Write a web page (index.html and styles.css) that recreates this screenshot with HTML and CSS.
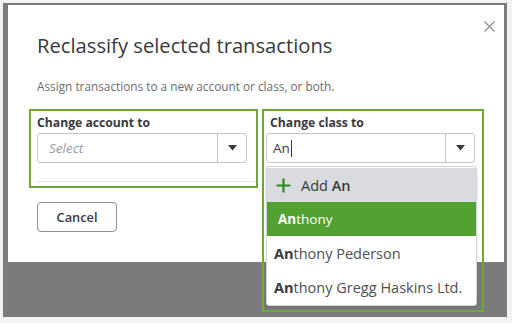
FILE: index.html
```html
<!DOCTYPE html>
<html>
<head>
<meta charset="utf-8">
<link rel="stylesheet" href="styles.css">
</head>
<body>
<div class="overlay">
  <div class="modal">
    <button class="close" aria-label="Close">
      <svg width="11" height="11" viewBox="0 0 11 11"><path d="M0.5 0.5 L10.5 10.5 M10.5 0.5 L0.5 10.5" stroke="#8d9096" stroke-width="1.3" fill="none"/></svg>
    </button>
    <h1 class="title">Reclassify selected transactions</h1>
    <p class="subtitle">Assign transactions to a new account or class, or both.</p>
    <div class="fields">
      <div class="field field-account">
        <label class="label">Change account to</label>
        <div class="select">
          <span class="select-value placeholder">Select</span>
          <span class="select-arrow"><svg width="9" height="6" viewBox="0 0 9 6"><path d="M0 0 H9 L4.5 5.5 Z" fill="#393a3d"/></svg></span>
        </div>
        <div class="divider"></div>
      </div>
      <div class="field field-class">
        <label class="label label-class">Change class to</label>
        <div class="select">
          <span class="select-value">An<span class="caret"></span></span>
          <span class="select-arrow"><svg width="9" height="6" viewBox="0 0 9 6"><path d="M0 0 H9 L4.5 5.5 Z" fill="#393a3d"/></svg></span>
        </div>
        <ul class="dropdown">
          <li class="option option-add">
            <svg class="plus" width="15" height="15" viewBox="0 0 15 15"><path d="M7.5 0.5 V14.5 M0.5 7.5 H14.5" stroke="#2e8c1e" stroke-width="2.2" fill="none"/></svg>
            <span>Add <b>An</b></span>
          </li>
          <li class="option option-active"><b>An</b>thony</li>
          <li class="option"><b>An</b>thony Pederson</li>
          <li class="option"><b>An</b>thony Gregg Haskins Ltd.</li>
        </ul>
      </div>
    </div>
    <button class="cancel">Cancel</button>
  </div>
</div>
</body>
</html>
```

FILE: styles.css
```css
* { box-sizing: border-box; }
html, body { margin: 0; padding: 0; }
body {
  background: #f3f3f3;
  width: 512px;
  height: 323px;
  padding: 3px 0 0 3px;
  font-family: "Open Sans", Lato, sans-serif;
  color: #393a3d;
  overflow: hidden;
}
.overlay {
  width: 504px;
  height: 314px;
  background: #7b7b7b;
  padding: 2px 0 0 5px;
}
.modal {
  position: relative;
  width: 496px;
  height: 257px;
  background: #fff;
  padding: 0 0 0 21px;
}
.close {
  position: absolute;
  top: 12px;
  right: 5px;
  width: 19px;
  height: 19px;
  padding: 4px;
  border: 0;
  background: none;
}
.close svg { display: block; }
.title {
  margin: 0;
  padding: 27px 0 0 8px;
  font-size: 20.2px;
  line-height: 26px;
  font-weight: 400;
  color: #393a3d;
}
.subtitle {
  margin: 0;
  padding: 19px 0 0 8px;
  font-size: 11.8px;
  line-height: 18px;
  color: #6b6c72;
}
.fields {
  display: flex;
  align-items: flex-start;
  gap: 4px;
  height: 79px;
  margin-top: 14px;
}
.field {
  position: relative;
  flex: none;
  border: 2px solid #6fa83b;
}
.field-account {
  width: 229px;
  height: 79px;
  padding: 4px 9px 0 6px;
}
.field-class {
  width: 222px;
  height: 203px;
  padding: 4px 7px 0 2px;
}
.label {
  display: block;
  font-size: 12.2px;
  line-height: 16px;
  font-weight: 700;
  color: #393a3d;
  margin-bottom: 2px;
}
.label-class { padding-left: 4px; }
.select {
  display: flex;
  height: 30px;
  border: 1px solid #c4c6ca;
  border-radius: 3px;
  background: #fff;
}
.select-value {
  flex: 1;
  display: flex;
  align-items: center;
  padding-left: 6px;
  font-size: 13.5px;
  color: #393a3d;
}
.placeholder {
  font-style: italic;
  color: #9a9ca2;
  padding-left: 11px;
}
.caret {
  display: inline-block;
  width: 1px;
  height: 17px;
  background: #393a3d;
  margin-left: 1px;
}
.select-arrow {
  width: 29px;
  border-left: 1px solid #c4c6ca;
  display: flex;
  align-items: center;
  justify-content: center;
}
.select-arrow svg { display: block; }
.divider {
  margin-top: 18px;
  margin-left: 0;
  margin-right: -9px;
  height: 1px;
  background: #e3e4e6;
}
.dropdown {
  position: absolute;
  left: 2px;
  top: 55px;
  width: 211px;
  margin: 0;
  padding: 1px 0;
  list-style: none;
  background: #fff;
  border: 1px solid #d4d6da;
  border-radius: 3px;
  box-shadow: 0 1px 3px rgba(0,0,0,0.15);
}
.option {
  height: 34px;
  display: flex;
  align-items: center;
  padding-left: 7px;
  font-size: 14.5px;
  color: #4f5055;
}
.option b { font-weight: 700; color: #393a3d; }
.option-add {
  background: #d9dbdf;
  padding-left: 9px;
  gap: 10px;
  color: #393a3d;
}
.option-add b { font-weight: 600; }
.option-active {
  background: #53a131;
  color: #fff;
  padding-left: 11px;
  font-size: 13.5px;
}
.option-active b { color: #fff; }
.plus { display: block; }
.cancel {
  display: block;
  margin: 14px 0 0 8px;
  width: 80px;
  height: 30px;
  background: #fff;
  border: 1px solid #8d9096;
  border-radius: 4px;
  font-family: "Open Sans", Lato, sans-serif;
  font-size: 12.8px;
  font-weight: 600;
  color: #393a3d;
}
```
